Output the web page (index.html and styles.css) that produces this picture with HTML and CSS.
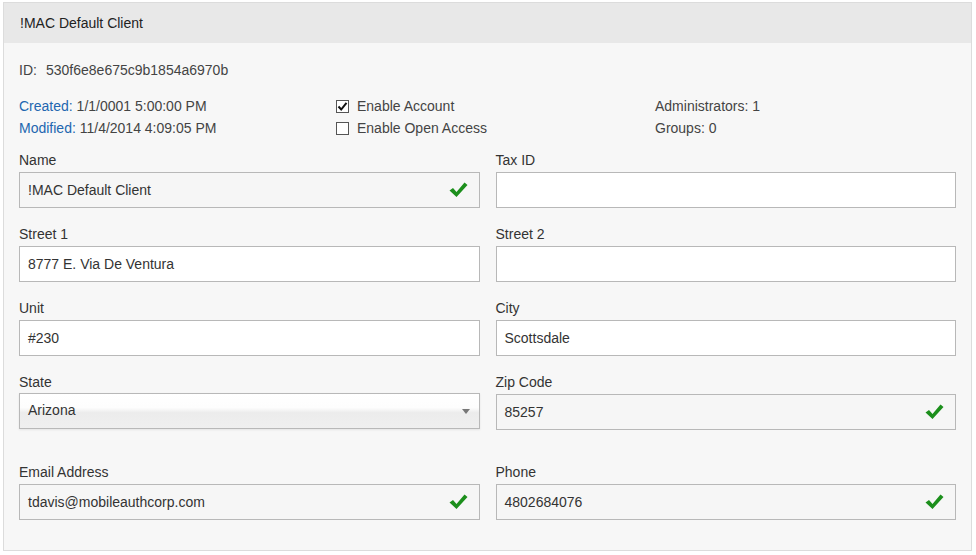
FILE: index.html
```html
<!DOCTYPE html>
<html>
<head>
<meta charset="utf-8">
<link rel="stylesheet" href="styles.css">
</head>
<body>
<div class="panel">
  <div class="panel-head">!MAC Default Client</div>
  <div class="panel-body">
    <div class="id-row"><span class="id-label">ID:</span><span class="id-val">530f6e8e675c9b1854a6970b</span></div>
    <div class="info">
      <div class="info-col">
        <div class="line"><span class="blue">Created:</span> 1/1/0001 5:00:00 PM</div>
        <div class="line"><span class="blue">Modified:</span> 11/4/2014 4:09:05 PM</div>
      </div>
      <div class="info-col">
        <div class="line chk"><span class="box"><svg width="11" height="11" viewBox="0 0 11 11"><path d="M1.5 5.5 L4.2 8.5 L9.5 1.8" fill="none" stroke="#111" stroke-width="2"/></svg></span>Enable Account</div>
        <div class="line chk"><span class="box"></span>Enable Open Access</div>
      </div>
      <div class="info-col">
        <div class="line">Administrators: 1</div>
        <div class="line">Groups: 0</div>
      </div>
    </div>
    <div class="grid">
      <div class="field">
        <div class="lbl">Name</div>
        <div class="inp valid">!MAC Default Client<svg class="ok" width="19" height="16" viewBox="0 0 19 16"><path d="M0.5 8.5 L4 6 L7.5 10 L15.5 0.5 L18.5 3 L7.5 15 Z" fill="#1c8f1c"/></svg></div>
      </div>
      <div class="field">
        <div class="lbl">Tax ID</div>
        <div class="inp"></div>
      </div>
      <div class="field">
        <div class="lbl">Street 1</div>
        <div class="inp">8777 E. Via De Ventura</div>
      </div>
      <div class="field">
        <div class="lbl">Street 2</div>
        <div class="inp"></div>
      </div>
      <div class="field">
        <div class="lbl">Unit</div>
        <div class="inp">#230</div>
      </div>
      <div class="field">
        <div class="lbl">City</div>
        <div class="inp">Scottsdale</div>
      </div>
      <div class="field">
        <div class="lbl">State</div>
        <div class="inp select">Arizona<span class="arrow"></span></div>
      </div>
      <div class="field">
        <div class="lbl">Zip Code</div>
        <div class="inp valid">85257<svg class="ok" width="19" height="16" viewBox="0 0 19 16"><path d="M0.5 8.5 L4 6 L7.5 10 L15.5 0.5 L18.5 3 L7.5 15 Z" fill="#1c8f1c"/></svg></div>
      </div>
      <div class="field spaced">
        <div class="lbl">Email Address</div>
        <div class="inp valid">tdavis@mobileauthcorp.com<svg class="ok" width="19" height="16" viewBox="0 0 19 16"><path d="M0.5 8.5 L4 6 L7.5 10 L15.5 0.5 L18.5 3 L7.5 15 Z" fill="#1c8f1c"/></svg></div>
      </div>
      <div class="field spaced">
        <div class="lbl">Phone</div>
        <div class="inp valid">4802684076<svg class="ok" width="19" height="16" viewBox="0 0 19 16"><path d="M0.5 8.5 L4 6 L7.5 10 L15.5 0.5 L18.5 3 L7.5 15 Z" fill="#1c8f1c"/></svg></div>
      </div>
    </div>
  </div>
</div>
</body>
</html>
```
FILE: styles.css
```css
html, body {
  margin: 0;
  padding: 0;
  background: #ffffff;
}
body {
  font-family: "Liberation Sans", Arial, sans-serif;
  font-size: 14px;
  color: #333;
}
.panel {
  margin: 2px 0 0 3px;
  width: 967px;
  height: 547px;
  border: 1px solid #dcdcdc;
  background: #f7f7f7;
}
.panel-head {
  height: 40px;
  line-height: 40px;
  background: #e8e8e8;
  padding-left: 16px;
  font-size: 14px;
  color: #222;
}
.panel-body {
  padding: 16px 15px 0 15px;
}
.id-row {
  line-height: 20px;
  color: #444;
  font-size: 14px;
  padding-top: 1px;
}
.id-label {
  display: inline-block;
  width: 27px;
}
.info {
  display: grid;
  grid-template-columns: 317px 319px 1fr;
  margin-top: 15px;
}
.line {
  line-height: 22px;
  color: #444;
  font-size: 14px;
  white-space: nowrap;
}
.blue {
  color: #2266b0;
}
.chk {
  display: flex;
  align-items: center;
}
.box {
  width: 11px;
  height: 11px;
  border: 1px solid #555;
  background: #fff;
  margin-right: 8px;
  margin-left: 0;
  display: inline-flex;
}
.grid {
  display: grid;
  grid-template-columns: 1fr 1fr;
  column-gap: 16px;
  row-gap: 16px;
  margin-top: 11px;
}
.field.spaced {
  margin-top: 16px;
}
.lbl {
  line-height: 20px;
  margin-bottom: 2px;
  color: #333;
  font-size: 14px;
}
.inp {
  height: 34px;
  border: 1px solid #b8b8b8;
  background: #fff;
  padding: 0 11px 0 8px;
  display: flex;
  align-items: center;
  justify-content: space-between;
  color: #333;
  font-size: 14px;
}
.inp.valid {
  background: #f6f6f6;
}
.inp.select {
  background: linear-gradient(#ffffff 0%, #fdfdfd 40%, #ececec 55%, #efefef 100%);
  box-shadow: 0 1px 2px rgba(0,0,0,0.08);
  padding-bottom: 2px;
  box-sizing: content-box;
  height: 32px;
  margin-top: -1px;
}
.arrow {
  width: 0;
  height: 0;
  border-left: 4px solid transparent;
  border-right: 4px solid transparent;
  border-top: 5px solid #777;
  margin-right: -2px;
  margin-top: 2px;
}
.ok {
  display: block;
}
```
